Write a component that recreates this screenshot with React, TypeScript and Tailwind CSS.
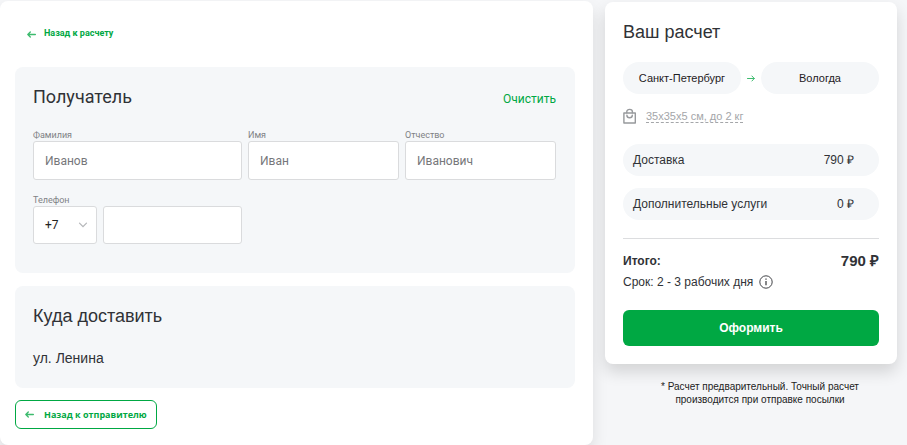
import { useState } from 'react';
import type { ReactNode } from 'react';

function ArrowLeft() {
	return (
		<svg
			className="h-[7px] w-[9px] shrink-0"
			viewBox="0 0 9 7"
			fill="none"
			stroke="#3dbb6e"
			strokeWidth="1.3"
			strokeLinecap="round"
			strokeLinejoin="round"
		>
			<path d="M0.8 3.5H8.4M3.3 1L0.8 3.5L3.3 6" />
		</svg>
	);
}

function ArrowRight() {
	return (
		<svg
			className="h-[7px] w-2 shrink-0"
			viewBox="0 0 8 7"
			fill="none"
			stroke="#3dbb6e"
			strokeLinecap="round"
			strokeLinejoin="round"
		>
			<path d="M0.5 3.5H7.2M4.9 1L7.3 3.5L4.9 6" />
		</svg>
	);
}

function ChevronDown() {
	return (
		<svg
			className="pointer-events-none absolute right-[9px] top-4 h-[6px] w-[10px]"
			viewBox="0 0 10 6"
			fill="none"
			stroke="#b4b6b9"
			strokeWidth="1.2"
			strokeLinecap="round"
		>
			<path d="M1.5 1.2L5 4.7L8.5 1.2" />
		</svg>
	);
}

function BagIcon() {
	return (
		<svg
			className="h-4 w-[14px] shrink-0"
			viewBox="0 0 14 16"
			fill="none"
			stroke="#97999c"
			strokeWidth="1.4"
			strokeLinecap="round"
			strokeLinejoin="round"
		>
			<path d="M0.9 5H12.3V15H0.9Z" />
			<path d="M3.8 4.8V3.8C3.8 2.3 5 1.4 6.6 1.4S9.4 2.3 9.4 3.8V4.8" />
			<path d="M3.9 7.2C3.9 8.8 5 9.7 6.6 9.7S9.3 8.8 9.3 7.2" />
		</svg>
	);
}

function InfoIcon() {
	return (
		<svg className="h-[14px] w-[14px]" viewBox="0 0 14 14" fill="none" stroke="#424448">
			<circle cx="7" cy="7" r="6.2" />
			<path d="M7 6V10.3" strokeWidth="1.3" />
			<path d="M7 3.5V4.8" strokeWidth="1.3" />
		</svg>
	);
}

type FieldProps = {
	id: string;
	label: string;
	placeholder: string;
	value: string;
	onChange: (value: string) => void;
};

function Field({ id, label, placeholder, value, onChange }: FieldProps) {
	return (
		<div className="flex min-w-0 flex-col">
			<label className="text-[9px] leading-3 text-[#808285]" htmlFor={id}>
				{label}
			</label>
			<input
				className="h-[39px] w-full rounded-[3px] border border-[#dadbdd] bg-white px-[11px] text-xs text-[#222] outline-none placeholder:text-[#76777a]"
				type="text"
				id={id}
				placeholder={placeholder}
				value={value}
				onChange={(e) => onChange(e.target.value)}
			/>
		</div>
	);
}

function PriceRow({ title, price }: { title: string; price: string }) {
	return (
		<div className="flex h-8 items-center justify-between rounded-full bg-[#f5f7f9] pl-[10px] pr-[25px] text-xs">
			<span>{title}</span>
			<span>{price}</span>
		</div>
	);
}

function City({ children }: { children: ReactNode }) {
	return (
		<div className="flex h-8 min-w-0 flex-1 items-center justify-center rounded-full bg-[#f5f7f9] text-[11px] text-[#1f2023]">
			{children}
		</div>
	);
}

export default function App() {
	const [surname, setSurname] = useState('');
	const [name, setName] = useState('');
	const [patronymic, setPatronymic] = useState('');
	const [phone, setPhone] = useState('');

	const clear = () => {
		setSurname('');
		setName('');
		setPatronymic('');
		setPhone('');
	};

	return (
		<div className="flex min-h-screen gap-3 bg-[#f5f6f8] pr-[10px] font-['Roboto',sans-serif] text-[#303236]">
			<main className="mt-px min-w-0 flex-1 rounded-lg bg-white pb-4 pl-[15px] pr-[18px] pt-5 shadow-[0_8px_16px_rgba(0,0,0,0.1)]">
				<a
					className="ml-3 flex h-[26px] w-fit items-center gap-2 text-[9px] font-bold text-[#00a843]"
					href="#calc"
				>
					<ArrowLeft />
					Назад к расчету
				</a>

				<section className="mt-5 rounded-lg bg-[#f5f7f9] pb-[29px] pl-[18px] pr-[19px] pt-[18px]">
					<div className="flex items-center justify-between">
						<h2 className="text-lg leading-6">Получатель</h2>
						<button className="mt-1 text-xs text-[#00a843]" type="button" onClick={clear}>
							Очистить
						</button>
					</div>
					<div className="mt-5 grid grid-cols-[minmax(0,209fr)_minmax(0,151fr)_minmax(0,151fr)] gap-x-[6px] gap-y-[14px]">
						<Field
							id="surname"
							label="Фамилия"
							placeholder="Иванов"
							value={surname}
							onChange={setSurname}
						/>
						<Field id="name" label="Имя" placeholder="Иван" value={name} onChange={setName} />
						<Field
							id="patronymic"
							label="Отчество"
							placeholder="Иванович"
							value={patronymic}
							onChange={setPatronymic}
						/>
						<div>
							<label className="block text-[9px] leading-3 text-[#808285]" htmlFor="phone">
								Телефон
							</label>
							<div className="flex gap-[6px]">
								<div className="relative w-16 shrink-0">
									<select
										className="h-[38px] w-full appearance-none rounded-[3px] border border-[#dadbdd] bg-white px-[11px] text-xs text-[#222] outline-none"
										aria-label="Код страны"
									>
										<option>+7</option>
									</select>
									<ChevronDown />
								</div>
								<input
									className="h-[38px] min-w-0 flex-1 rounded-[3px] border border-[#dadbdd] bg-white px-[11px] text-xs text-[#222] outline-none"
									type="tel"
									id="phone"
									value={phone}
									onChange={(e) => setPhone(e.target.value)}
								/>
							</div>
						</div>
					</div>
				</section>

				<section className="mt-[13px] rounded-lg bg-[#f5f7f9] px-[18px] pb-5 pt-[18px] font-['Liberation_Sans',Arial,sans-serif]">
					<h2 className="text-lg leading-6">Куда доставить</h2>
					<p className="mt-5 text-sm leading-5">ул. Ленина</p>
				</section>

				<button
					className="mt-3 flex h-[29px] items-center gap-[10px] rounded-md border border-[#00a843] px-[9px] font-['Open_Sans',sans-serif] text-[9px] font-bold text-[#00a843]"
					type="button"
				>
					<ArrowLeft />
					Назад к отправителю
				</button>
			</main>

			<aside className="mt-[2px] w-[292px] shrink-0 font-['Liberation_Sans',Arial,sans-serif]">
				<div className="rounded-lg bg-white p-[18px] shadow-[0_8px_16px_rgba(0,0,0,0.14)]">
					<h2 className="text-lg leading-6">Ваш расчет</h2>
					<div className="mt-[18px] flex items-center gap-[6px]">
						<City>Санкт-Петербург</City>
						<ArrowRight />
						<City>Вологда</City>
					</div>
					<div className="mt-[14px] flex items-center gap-[9px]">
						<BagIcon />
						<span className="border-b border-dashed border-[#a4a6a9] text-[11px] leading-3 text-[#a4a6a9]">
							35х35х5 см, до 2 кг
						</span>
					</div>
					<div className="mt-5 flex flex-col gap-3">
						<PriceRow title="Доставка" price="790 ₽" />
						<PriceRow title="Дополнительные услуги" price="0 ₽" />
					</div>
					<div className="mt-[18px] flex items-center justify-between border-t border-[#dcdddf] pt-3 font-bold">
						<span className="text-xs leading-5">Итого:</span>
						<span className="text-[15px] leading-5">790 ₽</span>
					</div>
					<div className="mt-px flex items-center gap-[6px] text-xs leading-5">
						Срок: 2 - 3 рабочих дня
						<InfoIcon />
					</div>
					<button
						className="mt-[18px] h-9 w-full rounded-md bg-[#00a843] text-xs font-bold text-white"
						type="button"
					>
						Оформить
					</button>
				</div>
				<p className="mt-4 pl-[18px] text-center text-[10px] leading-[13px] text-[#222]">
					* Расчет предварительный. Точный расчет
					<br />
					производится при отправке посылки
				</p>
			</aside>
		</div>
	);
}
